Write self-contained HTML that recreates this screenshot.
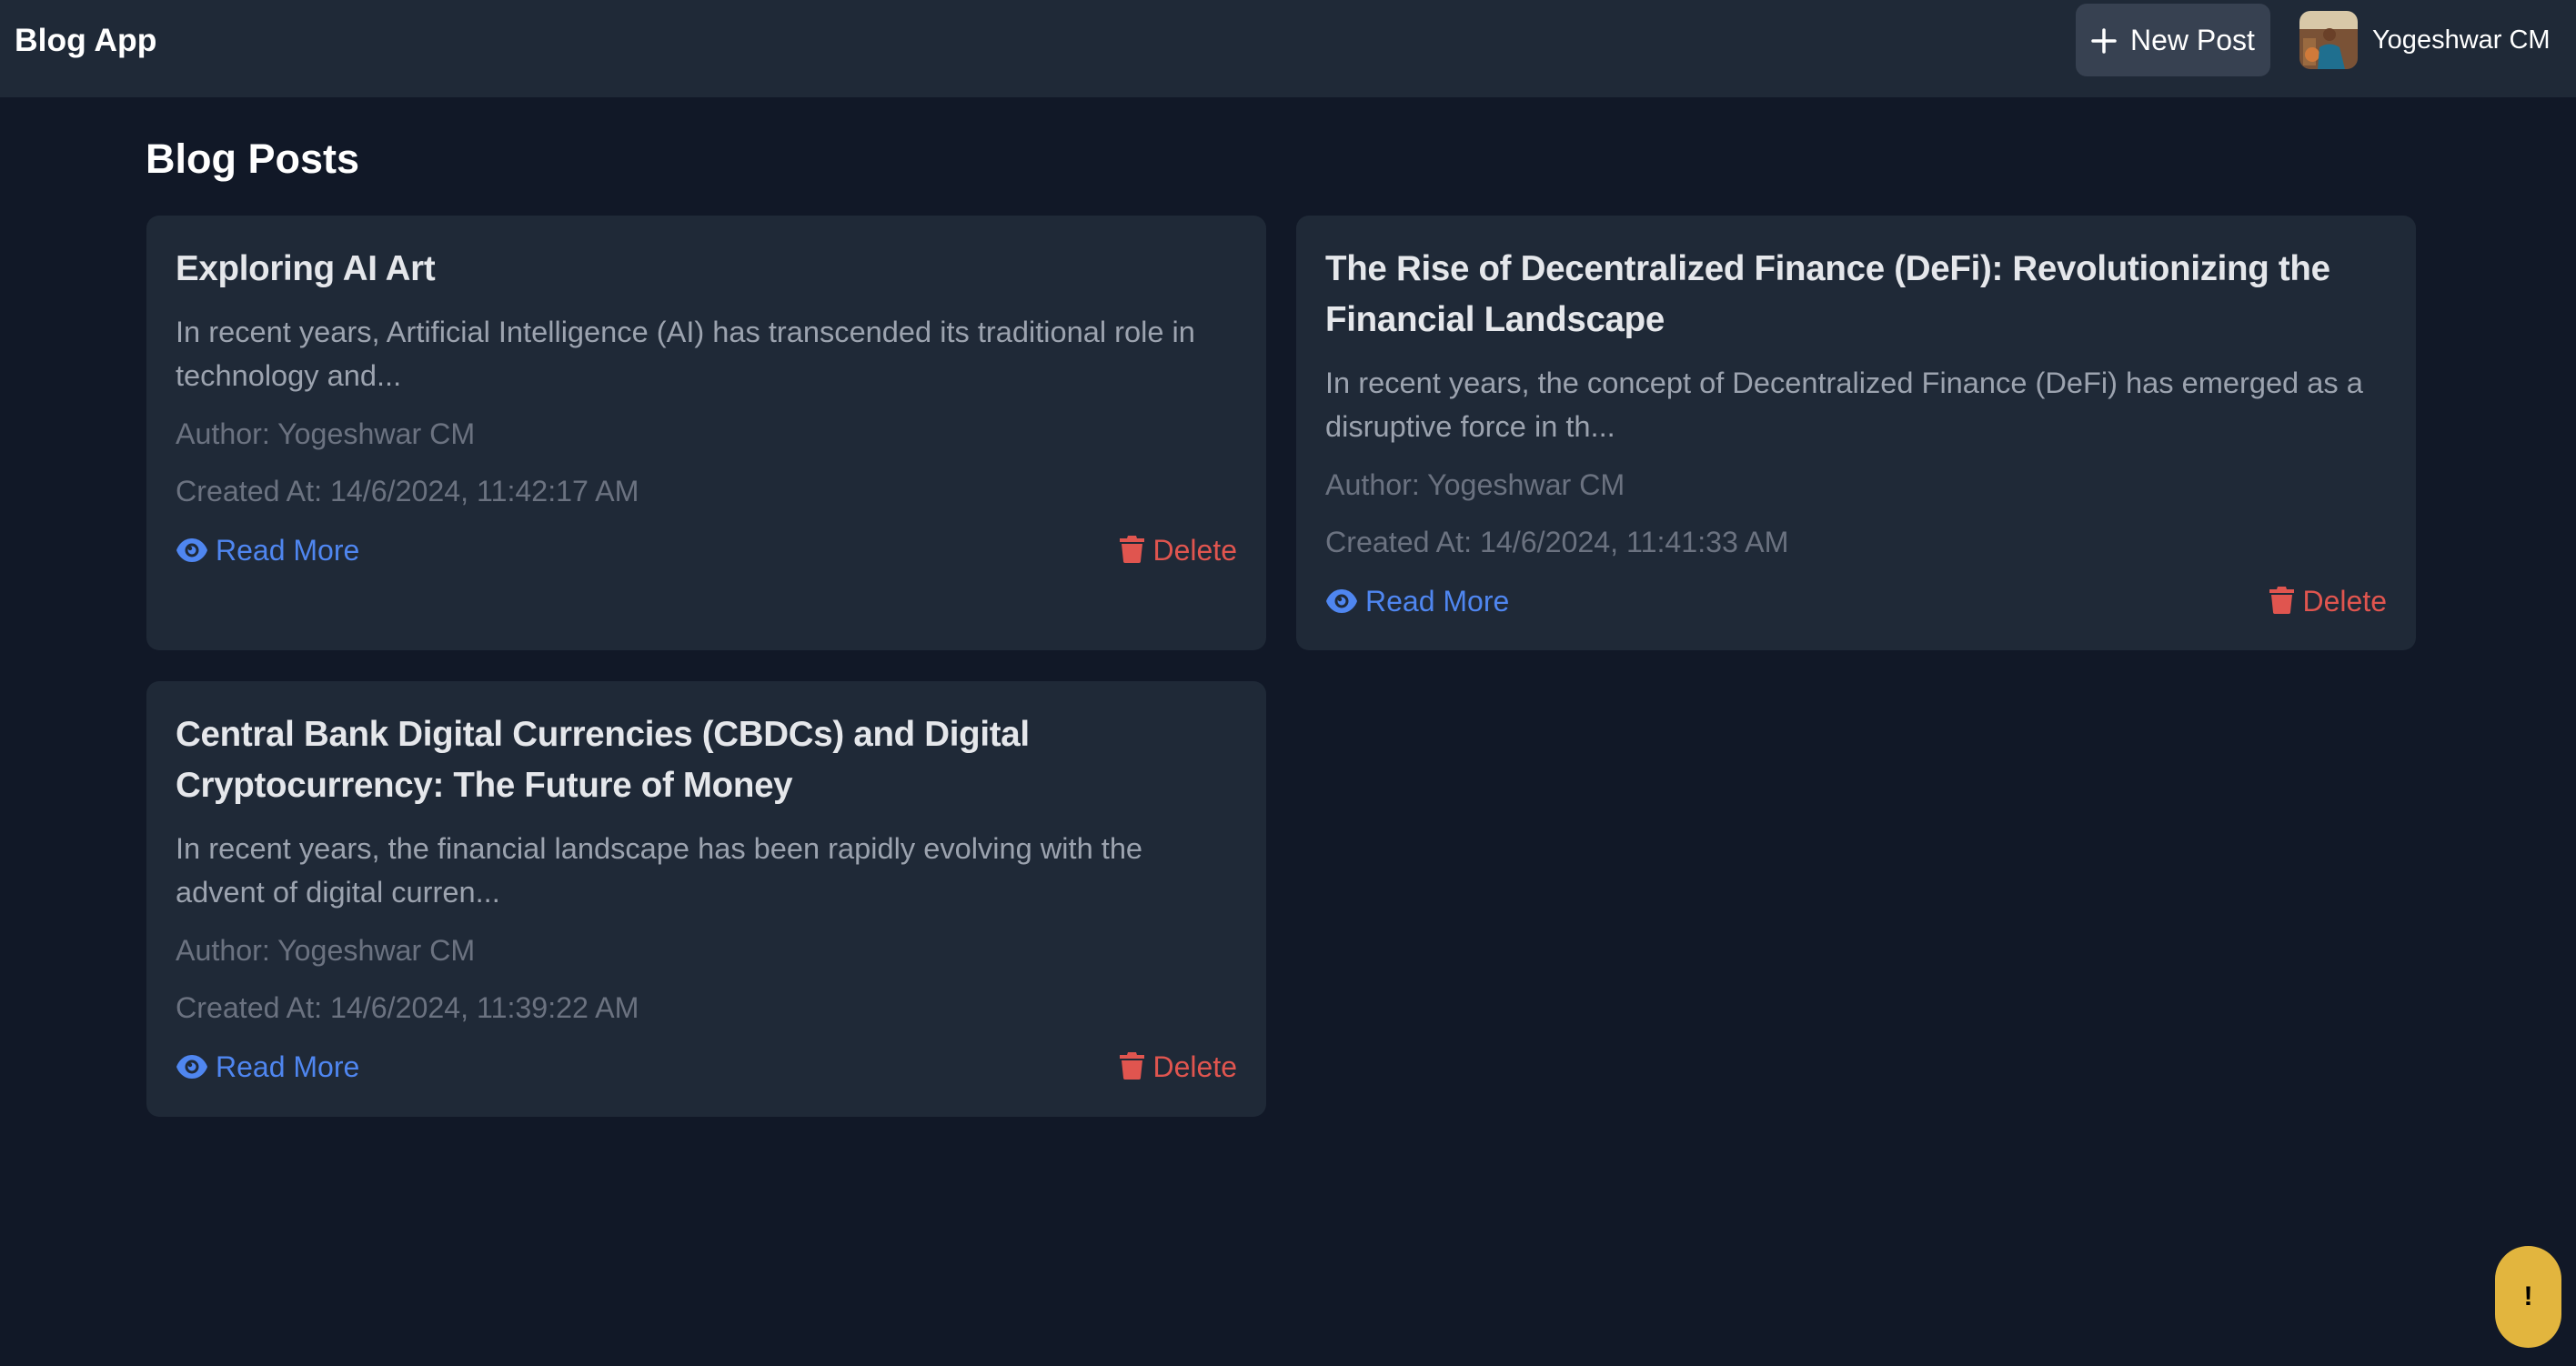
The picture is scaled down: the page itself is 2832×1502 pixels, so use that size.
<!DOCTYPE html>
<html><head><meta charset="utf-8">
<style>
*{margin:0;padding:0;box-sizing:border-box}
html,body{width:2832px;height:1502px;overflow:hidden;background:#111827;font-family:"Liberation Sans",sans-serif}
.hdr{position:absolute;left:0;top:0;width:2832px;height:107px;background:#1f2937}
.logo{position:absolute;left:16px;top:22px;font-size:35.5px;font-weight:bold;color:#fff;line-height:44px}
.btn{position:absolute;left:2282px;top:4px;width:214px;height:80px;background:#374151;border-radius:12px;color:#fff;font-size:32px;line-height:80px}
.btn svg{position:absolute;left:17px;top:27px}
.btn span{position:absolute;left:60px;top:0}
.av{position:absolute;left:2528px;top:12px;width:64px;height:64px;border-radius:12px;overflow:hidden}
.name{position:absolute;left:2608px;top:22px;font-size:29px;color:#fff;line-height:44px}
h1{position:absolute;left:160px;top:145px;font-size:45px;font-weight:bold;color:#fff;line-height:60px}
.card{position:absolute;width:1231px;background:#1f2937;border-radius:14px;padding:31px 32px}
.t{font-size:38.5px;font-weight:bold;color:#e5e7eb;line-height:56px;letter-spacing:-0.3px}
.ex{font-size:32.6px;color:#9ca3af;line-height:48px;margin-top:17px}
.m{font-size:32.2px;color:#6b7280;line-height:48px;margin-top:16px}
.m2{margin-top:15px}
.act{position:relative;height:48px;margin-top:17px;font-size:32px;line-height:48px}
.rm{position:absolute;left:0;top:0;color:#4f86f0;padding-left:44px}
.rm svg{position:absolute;left:0;top:10px}
.del{position:absolute;right:0;top:0;color:#e0554f;padding-left:38px}
.del svg{position:absolute;left:0;top:7px}
.badge{position:absolute;left:2743px;top:1370px;width:73px;height:112px;border-radius:37px;background:#e2b53e;color:#000;font-size:30px;font-weight:bold;text-align:center;line-height:112px}
</style></head><body>
<div class="hdr">
<div class="logo">Blog App</div>
<div class="btn"><svg width="28" height="28" viewBox="0 0 28 28"><path d="M14 2v24M2 14h24" stroke="#fff" stroke-width="3.5" stroke-linecap="round"/></svg><span>New Post</span></div>
<div class="av"><svg width="64" height="64" viewBox="0 0 64 64"><rect width="64" height="20" fill="#d8c8a8"/><rect y="20" width="64" height="44" fill="#7a5236"/><path d="M4 30h14v30H4z" fill="#9a6a40"/><circle cx="14" cy="48" r="8" fill="#d07a3a"/><circle cx="33" cy="26" r="7" fill="#6a4028"/><path d="M20 64 L22 40 Q33 33 44 40 L50 64Z" fill="#1f6f8f"/></svg></div>
<div class="name">Yogeshwar CM</div>
</div>
<h1>Blog Posts</h1>

<div class="card" style="left:161px;top:237px;height:478px">
<div class="t">Exploring AI Art</div>
<div class="ex">In recent years, Artificial Intelligence (AI) has transcended its traditional role in technology and...</div>
<div class="m">Author: Yogeshwar CM</div>
<div class="m m2">Created At: 14/6/2024, 11:42:17 AM</div>
<div class="act"><div class="rm"><svg width="36" height="28" viewBox="0 0 36 28"><path d="M18 1C9 1 3 8 1 14c2 6 8 13 17 13s15-7 17-13C33 8 27 1 18 1z" fill="#4f86f0"/><circle cx="18" cy="14" r="7.5" fill="#1f2937"/><circle cx="18" cy="14" r="4.5" fill="#4f86f0"/><circle cx="16" cy="12" r="2.2" fill="#1f2937"/></svg>Read More</div>
<div class="del"><svg width="29" height="31" viewBox="0 0 29 31"><path d="M10 1h9l1 3h8v4H1V4h8z" fill="#e0554f"/><path d="M3 10h23l-2 19q0 2-2 2H7q-2 0-2-2z" fill="#e0554f"/></svg>Delete</div></div>
</div>

<div class="card" style="left:1425px;top:237px;height:478px">
<div class="t">The Rise of Decentralized Finance (DeFi): Revolutionizing the Financial Landscape</div>
<div class="ex">In recent years, the concept of Decentralized Finance (DeFi) has emerged as a disruptive force in th...</div>
<div class="m">Author: Yogeshwar CM</div>
<div class="m m2">Created At: 14/6/2024, 11:41:33 AM</div>
<div class="act"><div class="rm"><svg width="36" height="28" viewBox="0 0 36 28"><path d="M18 1C9 1 3 8 1 14c2 6 8 13 17 13s15-7 17-13C33 8 27 1 18 1z" fill="#4f86f0"/><circle cx="18" cy="14" r="7.5" fill="#1f2937"/><circle cx="18" cy="14" r="4.5" fill="#4f86f0"/><circle cx="16" cy="12" r="2.2" fill="#1f2937"/></svg>Read More</div>
<div class="del"><svg width="29" height="31" viewBox="0 0 29 31"><path d="M10 1h9l1 3h8v4H1V4h8z" fill="#e0554f"/><path d="M3 10h23l-2 19q0 2-2 2H7q-2 0-2-2z" fill="#e0554f"/></svg>Delete</div></div>
</div>

<div class="card" style="left:161px;top:749px;height:479px">
<div class="t">Central Bank Digital Currencies (CBDCs) and Digital Cryptocurrency: The Future of Money</div>
<div class="ex">In recent years, the financial landscape has been rapidly evolving with the<br>advent of digital curren...</div>
<div class="m">Author: Yogeshwar CM</div>
<div class="m m2">Created At: 14/6/2024, 11:39:22 AM</div>
<div class="act"><div class="rm"><svg width="36" height="28" viewBox="0 0 36 28"><path d="M18 1C9 1 3 8 1 14c2 6 8 13 17 13s15-7 17-13C33 8 27 1 18 1z" fill="#4f86f0"/><circle cx="18" cy="14" r="7.5" fill="#1f2937"/><circle cx="18" cy="14" r="4.5" fill="#4f86f0"/><circle cx="16" cy="12" r="2.2" fill="#1f2937"/></svg>Read More</div>
<div class="del"><svg width="29" height="31" viewBox="0 0 29 31"><path d="M10 1h9l1 3h8v4H1V4h8z" fill="#e0554f"/><path d="M3 10h23l-2 19q0 2-2 2H7q-2 0-2-2z" fill="#e0554f"/></svg>Delete</div></div>
</div>

<div class="badge">!</div>
</body></html>
